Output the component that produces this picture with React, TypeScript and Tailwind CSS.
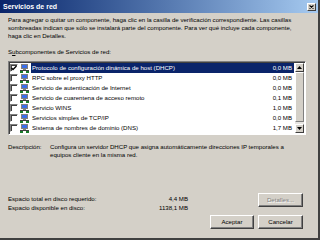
import React from 'react';

const rows = [
  { name: 'Protocolo de configuración dinámica de host (DHCP)', size: '0,0 MB', checked: true },
  { name: 'RPC sobre el proxy HTTP', size: '0,0 MB', checked: false },
  { name: 'Servicio de autenticación de Internet', size: '0,0 MB', checked: false },
  { name: 'Servicio de cuarentena de acceso remoto', size: '0,1 MB', checked: false },
  { name: 'Servicio WINS', size: '1,0 MB', checked: false },
  { name: 'Servicios simples de TCP/IP', size: '0,0 MB', checked: false },
  { name: 'Sistema de nombres de dominio (DNS)', size: '1,7 MB', checked: false },
];

function NetIcon() {
  return (
    <svg width="9" height="9" viewBox="0 0 9 9" className="shrink-0">
      <rect x="1" y="0" width="7" height="5" fill="#808080" />
      <rect x="2" y="1" width="5" height="3" fill="#3a6ee8" />
      <rect x="3" y="5" width="3" height="1" fill="#808080" />
      <rect x="0" y="6" width="9" height="1" fill="#404040" />
      <rect x="0" y="7" width="3" height="2" fill="#1a7a2a" />
      <rect x="6" y="7" width="3" height="2" fill="#1a7a2a" />
    </svg>
  );
}

function Checkbox({ checked }: { checked: boolean }) {
  return (
    <div className="w-[8px] h-[8px] shrink-0 bg-white border-t border-l border-t-[#808080] border-l-[#808080] border-b border-r border-b-white border-r-white shadow-[inset_1px_1px_0_#404040] flex items-center justify-center">
      {checked && (
        <svg width="6" height="6" viewBox="0 0 6 6">
          <path d="M0.5 3 L2 4.5 L5.5 1" stroke="#000" strokeWidth="1.3" fill="none" />
        </svg>
      )}
    </div>
  );
}

function Button({ label, disabled, w = 'w-[45px]' }: { label: string; disabled?: boolean; w?: string }) {
  return (
    <div className={`${w} h-[14px] bg-[#d4d0c8] border border-t-white border-l-white border-b-[#404040] border-r-[#404040] shadow-[inset_-1px_-1px_0_#808080] flex items-center justify-center`}>
      <span className={disabled ? 'text-[#808080] [text-shadow:1px_1px_0_#fff]' : 'text-black'}>{label}</span>
    </div>
  );
}

export default function App() {
  return (
    <div className="w-[320px] h-[240px] bg-[#d4d0c8] flex flex-col border-r-2 border-b-2 border-r-[#404040] border-b-[#404040] text-[6.1px] leading-[8px] text-black overflow-hidden" style={{ fontFamily: '"Liberation Sans", Arial, sans-serif' }}>
      {/* Title bar */}
      <div className="h-[13px] shrink-0 bg-gradient-to-r from-[#0a246a] to-[#a6caf0] flex items-center justify-between pl-[3px] pr-[2px]">
        <span className="text-white font-bold text-[7px]">Servicios de red</span>
        <div className="w-[9px] h-[8px] bg-[#d4d0c8] border border-t-white border-l-white border-b-[#404040] border-r-[#404040] flex items-center justify-center">
          <svg width="5" height="4" viewBox="0 0 5 4">
            <path d="M0.5 0.5 L4.5 3.5 M4.5 0.5 L0.5 3.5" stroke="#000" strokeWidth="1.1" />
          </svg>
        </div>
      </div>

      <div className="flex flex-col px-[8px] pt-[3px]">
        <p className="w-[294px]">
          Para agregar o quitar un componente, haga clic en la casilla de verificación correspondiente. Las casillas sombreadas indican que sólo se instalará parte del componente. Para ver qué incluye cada componente, haga clic en Detalles.
        </p>
        <p className="mt-[8px]">
          S<span className="underline">u</span>bcomponentes de Servicios de red:
        </p>

        {/* List box */}
        <div className="mt-[5px] w-[298px] h-[74px] bg-white border border-t-[#808080] border-l-[#808080] border-b-white border-r-white shadow-[inset_1px_1px_0_#404040] flex">
          <div className="flex-1 flex flex-col pt-[1px] pl-[1px] pr-[1px]">
            {rows.map((r, i) => (
              <div key={r.name} className="h-[10px] flex items-center gap-[2px]">
                <Checkbox checked={r.checked} />
                <NetIcon />
                <div className={`flex-1 h-[10px] flex items-center justify-between pl-[1px] pr-[2px] ${i === 0 ? 'bg-[#0a246a] text-white' : ''}`}>
                  <span>{r.name}</span>
                  <span>{r.size}</span>
                </div>
              </div>
            ))}
          </div>
          {/* Scrollbar */}
          <div className="w-[9px] flex flex-col bg-[#e8e6e2] mt-[1px] mr-[1px] mb-[1px]">
            <div className="h-[9px] bg-[#d4d0c8] border border-t-white border-l-white border-b-[#404040] border-r-[#404040] flex items-center justify-center">
              <svg width="5" height="3" viewBox="0 0 5 3"><path d="M2.5 0 L5 3 L0 3 Z" fill="#000" /></svg>
            </div>
            <div className="flex-1 bg-[#d4d0c8] border border-t-white border-l-white border-b-[#808080] border-r-[#808080] mb-[2px]" />
            <div className="h-[9px] bg-[#d4d0c8] border border-t-white border-l-white border-b-[#404040] border-r-[#404040] flex items-center justify-center">
              <svg width="5" height="3" viewBox="0 0 5 3"><path d="M0 0 L5 0 L2.5 3 Z" fill="#000" /></svg>
            </div>
          </div>
        </div>

        {/* Description */}
        <div className="mt-[8px] flex">
          <span className="w-[42px] shrink-0">Descripción:</span>
          <p className="pr-[14px]">
            Configura un servidor DHCP que asigna automáticamente direcciones IP temporales a equipos cliente en la misma red.
          </p>
        </div>

        {/* Disk space */}
        <div className="mt-[36px] flex">
          <div className="w-[140px] flex flex-col gap-[1px]">
            <span>Espacio total en disco requerido:</span>
            <span>Espacio disponible en disco:</span>
          </div>
          <div className="w-[40px] flex flex-col items-end gap-[1px]">
            <span>4,4 MB</span>
            <span>1138,1 MB</span>
          </div>
          <div className="flex-1 flex flex-col items-end pr-[7px] -mt-[2px]">
            <Button label="Detalles..." disabled />
          </div>
        </div>

        <div className="mt-[3px] flex justify-end gap-[4px] pr-[7px]">
          <Button label="Aceptar" w="w-[44px]" />
          <Button label="Cancelar" />
        </div>
      </div>
    </div>
  );
}
